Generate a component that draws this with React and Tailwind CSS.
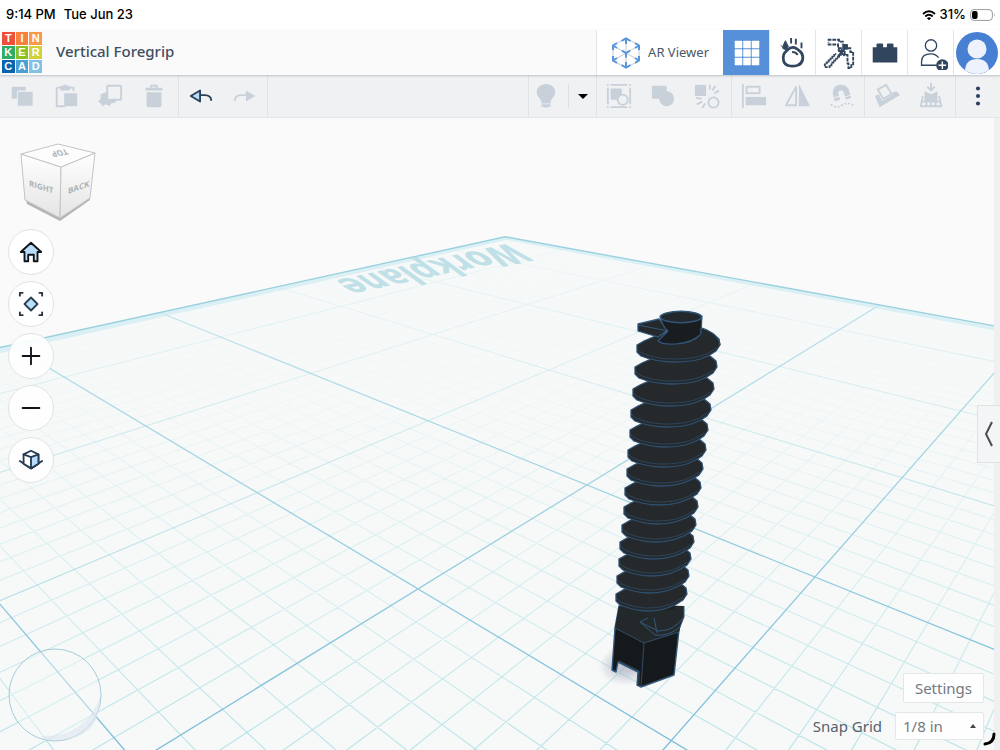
import React from 'react';
import clsx from 'clsx';

const LOGO = [
    ['T', 'bg-[#f0503a]'], ['I', 'bg-[#f9813a]'], ['N', 'bg-[#f99a48]'],
    ['K', 'bg-[#2fac66]'], ['E', 'bg-[#8cc220]'], ['R', 'bg-[#d3d13a]'],
    ['C', 'bg-[#0a63ae]'], ['A', 'bg-[#4b9fd3]'], ['D', 'bg-[#83c0e6]'],
];

// Workplane coordinates (inches from its centre) to screen coordinates
const depth = (u, v) => 1 - 0.201 * u - 0.178 * v;
const project = (u, v) => {
    const w = depth(u, v);
    return [(587 - 253 * u + 82.8 * v) / w, (485 - 14.4 * u - 10.7 * v) / w];
};
const EDGE = 3.84;
const NEAR = 0.4;
const endU = (v) => Math.min(EDGE, (1 - NEAR - 0.178 * v) / 0.201);
const endV = (u) => Math.min(EDGE, (1 - NEAR - 0.201 * u) / 0.178);
const segment = (a, b) => `M${a.map((n) => n.toFixed(1)).join(' ')}L${b.map((n) => n.toFixed(1)).join(' ')}`;

function gridPaths() {
    const paths = { minor: '', major: '', far: '' };
    for (let i = -30; i <= 30; i++) {
        const t = i / 8;
        const d = segment(project(-EDGE, t), project(endU(t), t)) + segment(project(t, -EDGE), project(t, endV(t)));
        if (i % 8 !== 0) paths.minor += d;
        else if (i < 0) paths.far += d;
        else paths.major += d;
    }
    return paths;
}

const GRID = gridPaths();
const toPoints = (pts) => pts.map((p) => p.map((n) => n.toFixed(1)).join(',')).join(' ');
const PLANE = toPoints([
    project(-EDGE, endV(-EDGE)), project(-EDGE, -EDGE), project(endU(-EDGE), -EDGE), [-2000, 1500], [2500, 1500],
]);
const INNER = EDGE - 0.12;
const BAND = toPoints([
    project(-EDGE, endV(-EDGE)), project(-EDGE, -EDGE), project(endU(-EDGE), -EDGE),
    project(endU(-INNER), -INNER), project(-INNER, -INNER), project(-INNER, endV(-INNER)),
]);
const OUTLINE = toPoints([project(-EDGE, endV(-EDGE)), project(-EDGE, -EDGE), project(endU(-EDGE), -EDGE)]);

// left x, right x, y of every turn of the thread, top to bottom
const TURNS = [
    [637, 720, 349], [635, 717, 371], [633, 714, 393], [631, 711, 414], [630, 708, 434],
    [628, 706, 454], [627, 703, 473], [625, 701, 492], [624, 698, 511], [622, 696, 529],
    [620, 694, 546], [619, 691, 563], [617, 689, 580], [616, 687, 598],
];

function Thread() {
    return TURNS.slice().reverse().map(([l, r, y]) => {
        const m = (l + r) / 2;
        return (
            <g key={y} stroke="#2f5070">
                <path
                    d={`M${l} ${y - 4}L${l} ${y + 3}L${l + 4} ${y + 7}C${l + 14} ${y + 11} ${l + 24} ${y + 13} ${m - 4} ${y + 13}C${r - 22} ${y + 13} ${r - 12} ${y + 8} ${r - 4} ${y + 2}L${r} ${y - 4}L${r - 1} ${y - 10}L${r - 7} ${y - 15}Q${m} ${y - 25} ${l + 7} ${y - 8}Z`}
                    fill="#25292c" strokeWidth="1.3"
                />
                <path d={`M${l} ${y}L${l + 5} ${y + 4}C${l + 14} ${y + 8} ${l + 24} ${y + 10} ${m - 4} ${y + 10}C${r - 22} ${y + 10} ${r - 12} ${y + 5} ${r - 4} ${y - 1}`} fill="none" strokeWidth="0.7" />
            </g>
        );
    });
}

function Scene() {
    return (
        <svg viewBox="0 118 1000 632" preserveAspectRatio="xMidYMid slice" className="absolute inset-0 h-full w-full" role="img" aria-label="Workplane">
            <defs>
                <linearGradient id="minor" gradientUnits="userSpaceOnUse" x1="0" y1="237" x2="0" y2="750">
                    <stop offset="0" stopColor="#c4e4e8" stopOpacity="0" />
                    <stop offset="0.3" stopColor="#c4e4e8" stopOpacity="0.12" />
                    <stop offset="0.6" stopColor="#bfe5e8" stopOpacity="0.45" />
                    <stop offset="1" stopColor="#b4e2e6" stopOpacity="0.9" />
                </linearGradient>
                <linearGradient id="major" gradientUnits="userSpaceOnUse" x1="0" y1="237" x2="0" y2="750">
                    <stop offset="0" stopColor="#a8dae4" stopOpacity="0.5" />
                    <stop offset="0.4" stopColor="#9dd2e0" stopOpacity="0.9" />
                    <stop offset="1" stopColor="#7cbcda" />
                </linearGradient>
                <linearGradient id="far" gradientUnits="userSpaceOnUse" x1="0" y1="237" x2="0" y2="620">
                    <stop offset="0" stopColor="#b8dfe6" stopOpacity="0.1" />
                    <stop offset="1" stopColor="#a5dae1" stopOpacity="0.9" />
                </linearGradient>
                <radialGradient id="shade">
                    <stop offset="0.3" stopColor="#8b90a8" stopOpacity="0.45" />
                    <stop offset="1" stopColor="#8b90a8" stopOpacity="0" />
                </radialGradient>
            </defs>
            <rect y="118" width="1000" height="632" fill="#fafafa" />
            <polygon points={PLANE} fill="#f7f9f9" />
            <path d={GRID.minor} stroke="url(#minor)" strokeWidth="1.2" fill="none" />
            <path d={GRID.far} stroke="url(#far)" strokeWidth="1.1" fill="none" />
            <path d={GRID.major} stroke="url(#major)" strokeWidth="1.3" fill="none" />
            <polygon points={BAND} fill="#cfecf3" fillOpacity="0.7" />
            <polyline points={OUTLINE} fill="none" stroke="#9bd0df" strokeWidth="1.4" />
            <text transform="translate(511 243) rotate(168) skewX(42)" fontFamily="'DejaVu Sans', sans-serif" fontWeight="700" fontSize="30" fill="#c0e0e7">Workplane</text>

            <ellipse cx="626" cy="666" rx="28" ry="20" fill="url(#shade)" />
            <g strokeLinejoin="round">
                <polygon points="619,606 683,612 679,630 674,675 641,687 637,685 638,672 618,662 616,672 612,670 615,628" fill="#16191b" stroke="#34587a" strokeWidth="1.4" />
                <polygon points="619,606 684,612 679,632 644,643 615,628" fill="#23282b" />
                <path d="M615 628L644 643L679 632M644 643L641 687M639 684V671L619 661" fill="none" stroke="#34587a" strokeWidth="0.8" />
                <path d="M626 604L684 606L684 617L680 627Q668 637 655 635L640 622L648 618Z" fill="#24292c" />
                <path d="M684 606V617L680 627Q668 637 655 635L640 622L648 618M640 622L658 631Q674 631 683 618M654 618L657 633" fill="none" stroke="#34587a" strokeWidth="1" />
                <polygon points="660,350 690,350 675,610 640,610" fill="#1d2123" />
                <Thread />
                <path d="M638 324L659 319L668 330L658 337L638 331Z" fill="#24292c" stroke="#31567a" strokeWidth="1.3" />
                <path d="M638 325L668 331" stroke="#31567a" strokeWidth="1" />
                <path d="M660 316Q663 328 668 331L658 341Q663 345 675 344Q693 343 701 334L702 316Z" fill="#191d1f" stroke="#31567a" strokeWidth="1.2" />
                <path d="M701 328Q720 334 720 345L700 345Z" fill="#24292c" />
                <path d="M702 328Q719 334 720 345M701 328V334" stroke="#31567a" strokeWidth="1.2" fill="none" />
                <ellipse cx="681" cy="317" rx="20.5" ry="5.7" fill="#22282b" stroke="#31567a" strokeWidth="1.5" />
            </g>
        </svg>
    );
}

function ViewCube() {
    return (
        <svg viewBox="0 0 100 84" className="block h-[84px] w-[100px]" role="img" aria-label="View cube">
            <defs>
                <linearGradient id="side" x1="0" y1="0" x2="0" y2="1">
                    <stop offset="0" stopColor="#ffffff" />
                    <stop offset="1" stopColor="#e4e4e4" />
                </linearGradient>
            </defs>
            <path d="M26 60L60 76L90 57L90 60L60 81L27 64Z" fill="#b4b4b4" />
            <path d="M21 14L61 27L60 78L25 60Z" fill="url(#side)" stroke="#c4c4c4" />
            <path d="M61 27L95 13L90 58L60 78Z" fill="url(#side)" stroke="#c4c4c4" />
            <path d="M58 4L21 14L61 27L95 13Z" fill="#fdfdfd" stroke="#c4c4c4" />
            <g fontFamily="'Open Sans', sans-serif" fontWeight="700" fill="#aeb2b6">
                <text transform="translate(29 46) skewY(17)" fontSize="8">RIGHT</text>
                <text transform="translate(68 54) skewY(-20)" fontSize="8">BACK</text>
                <text transform="translate(66 9) rotate(170) skewX(20)" fontSize="8">TOP</text>
            </g>
        </svg>
    );
}

function ToolButton({ label, children, className }) {
    return (
        <button type="button" aria-label={label} title={label} className={clsx('flex h-full w-11 items-center justify-center text-[#c8d1da]', className)}>
            <svg viewBox="0 0 28 28" className="size-[26px]" fill="currentColor">{children}</svg>
        </button>
    );
}

function ModeButton({ label, active, children }) {
    return (
        <button
            type="button"
            aria-label={label}
            className={clsx('flex w-[46px] items-center justify-center border-l', active ? 'border-[#5690d8] bg-[#5690d8] text-white' : 'border-[#e3e5e8] bg-white text-[#30465f]')}
        >
            <svg viewBox="0 0 36 36" className="size-[34px] shrink-0" fill="none" stroke="currentColor" strokeWidth="2">{children}</svg>
        </button>
    );
}

function NavButton({ label, children }) {
    return (
        <button type="button" aria-label={label} className="flex size-[46px] items-center justify-center rounded-full border border-[#e0e3e5] bg-white/90 text-[#101418]">
            <svg viewBox="0 0 28 28" className="size-[26px] shrink-0" fill="none" stroke="currentColor" strokeWidth="2" strokeLinecap="round" strokeLinejoin="round">{children}</svg>
        </button>
    );
}

function StatusBar() {
    return (
        <div className="flex h-[30px] items-center justify-between bg-white pl-[6px] pr-1 font-['Inter',sans-serif] text-[13px] font-medium text-black">
            <div className="flex gap-2">
                <span>9:14 PM</span>
                <span>Tue Jun 23</span>
            </div>
            <div className="flex items-center gap-1">
                <svg viewBox="0 0 14 11" className="h-[11px] w-[14px]" fill="none" stroke="#000" strokeWidth="2">
                    <path d="M1 4Q7 -1.6 13 4" />
                    <path d="M3.3 6.4Q7 3 10.7 6.4" />
                    <path d="M7 10.3L4.9 8.2Q7 6.5 9.1 8.2Z" fill="#000" stroke="none" />
                </svg>
                <span>31%</span>
                <svg viewBox="0 0 26 12" className="h-3 w-[26px]">
                    <rect x="0.6" y="0.6" width="21.8" height="10.8" rx="3.4" fill="#fff" stroke="#9a9a9a" />
                    <rect x="2" y="2" width="5.6" height="8" rx="2" />
                    <path d="M24 4Q25.6 6 24 8Z" fill="#9a9a9a" />
                </svg>
            </div>
        </div>
    );
}

function Header() {
    return (
        <header className="relative z-10 flex h-[45px] bg-[#fafafa] shadow-[0_1px_2px_rgba(90,105,120,0.35)]">
            <a href="#home" aria-label="Tinkercad" className="my-[2px] grid w-[42px] shrink-0 grid-cols-3 gap-px bg-white pl-[2px]">
                {LOGO.map(([letter, color]) => (
                    <span key={letter} className={clsx('flex h-[13px] items-center justify-center font-["Liberation_Sans",sans-serif] text-[11px] leading-none font-bold text-white', color)}>{letter}</span>
                ))}
            </a>
            <h1 className="ml-[14px] flex grow items-center pb-[2px] text-[15px] font-medium text-[#3d4e61]">Vertical Foregrip</h1>
            <button type="button" className="flex items-center gap-[7px] border-l border-[#e3e5e8] bg-white px-[14px] text-[13px] text-[#4a5768]">
                <svg viewBox="0 0 30 32" className="h-8 w-[30px]" fill="none" stroke="#5796dc" strokeWidth="2">
                    <path d="M15 2V30M2 8.5L15 16L28 8.5M2 23.5L15 16L28 23.5M2 8.5V23.5M28 8.5V23.5M2 8.5L15 1L28 8.5M2 23.5L15 31L28 23.5" stroke="#c3c7cc" strokeWidth="1" />
                    <path d="M10.5 4L15 1.5L19.5 4M15 2V7M2 13V8.5L6 6.2M2 8.5L6 11M28 13V8.5L24 6.2M28 8.5L24 11M2 19V23.5L6 25.8M2 23.5L6 21M28 19V23.5L24 25.8M28 23.5L24 21M10.5 28L15 30.5L19.5 28M15 30V25M11 13.7L15 16L19 13.7M15 16V20.5" />
                </svg>
                AR Viewer
            </button>
            <ModeButton label="3D design" active>
                <g fill="currentColor" stroke="none">
                    {[6, 15, 24].map((y) => [6, 15, 24].map((x) => <rect key={x + '-' + y} x={x - 1} y={y - 1} width="8" height="8" rx="0.6" />))}
                </g>
            </ModeButton>
            <ModeButton label="Sim lab">
                <path d="M18 12C22 12 24 15 27 18C30 23 28 29 23 31C17 33 9 32 8 26C7 21 8 18 11 16C13 14 14 12 18 12Z" strokeWidth="3" />
                <path d="M17 17Q21 17 23 20" />
                <path d="M16 2V8M21 3V9M27 7V13" />
                <path d="M10 5L13 11L11 15L7 13L8 9ZM5 10L9 13" fill="currentColor" strokeWidth="1" />
            </ModeButton>
            <ModeButton label="Blocks">
                <path d="M6 4H18V6H22V9M27 13H30V17H33V31H31V34H28V29H27V20H24V16H21V13H17V9H7V6" strokeDasharray="4 1" />
                <path d="M17 16H21V20H18V22H16V24H14V26H12V28H10V31H8V33H3V29H5V27H7V25H9V23H11V21H13V19H15" strokeDasharray="3 1" />
                <path d="M22 9H27V14H22Z" fill="currentColor" strokeWidth="1" />
                <path d="M17 14L24 21M24 14L17 21" />
            </ModeButton>
            <ModeButton label="Bricks">
                <path d="M5 12H9V9Q9 8 10 8H15Q16 8 16 9V12H20V9Q20 8 21 8H26Q27 8 27 9V12H31V28H5Z" fill="currentColor" stroke="none" />
            </ModeButton>
            <ModeButton label="Invite people">
                <circle cx="18" cy="10" r="6" strokeWidth="1.4" />
                <path d="M24 31H8V27Q8 19 18 19Q23 19 26 23" strokeWidth="1.4" />
                <circle cx="30" cy="31" r="6.5" fill="currentColor" stroke="none" />
                <path d="M30 27V35M26 31H34" stroke="#fff" strokeWidth="1.5" />
            </ModeButton>
            <button type="button" aria-label="Account" className="flex w-[47px] items-center justify-center border-l border-[#e3e5e8] bg-white">
                <svg viewBox="0 0 42 42" className="size-[42px] shrink-0">
                    <circle cx="21" cy="21" r="21" fill="#477fd3" />
                    <circle cx="21" cy="17" r="9.5" fill="#edf2fd" />
                    <path d="M9 38Q10 27 21 27Q32 27 33 38Q21 46 9 38Z" fill="#edf2fd" />
                </svg>
            </button>
        </header>
    );
}

function Toolbar() {
    return (
        <div className="flex h-[43px] border-b border-[#e4e6e8] bg-[#f0f1f3]">
            <div className="flex border-r border-[#e0e3e6]">
                <div className="flex border-r border-[#e0e3e6] pr-[2px]">
                    <ToolButton label="Copy">
                        <path d="M3 4h15v4H9v9H3z" /><rect x="9" y="9" width="17" height="16" rx="1" stroke="#f0f1f3" />
                    </ToolButton>
                    <ToolButton label="Paste">
                        <path d="M4 5H22V9M4 5V25H13" fill="none" stroke="currentColor" strokeWidth="2" /><path d="M8 3h3q2-3 4 0h3v5H8z" /><rect x="12" y="11" width="14" height="14" rx="1" />
                    </ToolButton>
                    <ToolButton label="Duplicate">
                        <path d="M4 12L12 9V18H20V21L15 22L14 25L9 23L6 25L4 22L1 20L4 17Z" /><rect x="11" y="3" width="15" height="15" rx="1" fill="#f0f1f3" stroke="currentColor" strokeWidth="2" />
                    </ToolButton>
                    <ToolButton label="Delete">
                        <path d="M5 5h5V2h8v3h5v3H5zM12 4v1h4V4z" fillRule="evenodd" /><path d="M6 10h16v14q0 2-2 2H8q-2 0-2-2z" />
                    </ToolButton>
                </div>
                <ToolButton label="Undo">
                    <path d="M3 14L13 8V20Z" fill="#b8dcf8" stroke="#2b4057" strokeWidth="2" strokeLinejoin="round" /><path d="M13 13H18Q25 13 25 19" fill="none" stroke="#2b4057" strokeWidth="2" />
                </ToolButton>
                <ToolButton label="Redo">
                    <path d="M25 14L15 8V20Z" /><path d="M16 13H10Q3 13 3 19" fill="none" stroke="currentColor" strokeWidth="2" />
                </ToolButton>
            </div>
            <div className="grow" />
            <div className="flex border-l border-[#e0e3e6]">
                <ToolButton label="Show all" className="w-[34px]">
                    <path d="M14 1C8 1 4 5 4 10C4 15 9 17 9 21V22H19V21C19 17 24 15 24 10C24 5 20 1 14 1ZM9 23h10v2q-5 3-10 0z" />
                </ToolButton>
                <button type="button" aria-label="Visibility options" className="my-[9px] ml-[5px] flex w-7 items-center justify-center border-l border-[#dcdfe2]">
                    <svg viewBox="0 0 10 5" className="h-[5px] w-[10px]"><path d="M0 0h10L5 5z" /></svg>
                </button>
            </div>
            <div className="flex border-l border-[#e0e3e6] pr-[2px]">
                <ToolButton label="Group">
                    <path d="M5 2H23M5 26H23M2 5V23M26 5V23" fill="none" stroke="currentColor" strokeWidth="2" /><path d="M1 1h2v2H1zM25 1h2v2h-2zM1 25h2v2H1zM25 25h2v2h-2z" />
                    <rect x="5" y="6" width="12" height="12" rx="1" /><circle cx="18" cy="18" r="5.5" fill="#f0f1f3" stroke="currentColor" strokeWidth="2" />
                </ToolButton>
                <ToolButton label="Union">
                    <rect x="2" y="3" width="16" height="14" rx="1" /><circle cx="18" cy="17" r="8" />
                </ToolButton>
                <ToolButton label="Ungroup">
                    <rect x="1" y="2" width="12" height="12" /><circle cx="21" cy="21" r="5.5" fill="none" stroke="currentColor" strokeWidth="2" />
                    <path d="M17 7V2M20 8L23 3M22 11L27 8M8 17L2 16M9 20L3 23M12 22L9 27" fill="none" stroke="currentColor" strokeWidth="2" />
                </ToolButton>
            </div>
            <div className="flex border-l border-[#e0e3e6]">
                <ToolButton label="Align">
                    <path d="M2 1V27" stroke="currentColor" strokeWidth="2" /><rect x="6" y="4" width="14" height="7" fill="none" stroke="currentColor" strokeWidth="2" /><rect x="5" y="15" width="22" height="9" />
                </ToolButton>
                <ToolButton label="Mirror">
                    <path d="M12 4V24H1Z" fill="none" stroke="currentColor" strokeWidth="2" /><path d="M15 1L27 25H15Z" />
                </ToolButton>
                <ToolButton label="Cruise">
                    <path d="M9 19L7 11Q7 5 13 5Q18 5 19 10L21 17" fill="none" stroke="currentColor" strokeWidth="6" /><path d="M5 16L12 14M17 15L24 13" stroke="#f0f1f3" />
                    <path d="M2 23Q8 28 14 24T26 24" fill="none" stroke="currentColor" strokeWidth="2" strokeDasharray="2 2" />
                </ToolButton>
            </div>
            <div className="flex border-l border-[#e0e3e6] pr-[2px]">
                <ToolButton label="Workplane">
                    <path d="M1 14L5 12L9 19L20 13L20 10L24 9L28 13L6 26Z" /><path d="M4 7L13 2L19 12L10 17Z" fill="#f0f1f3" stroke="currentColor" strokeWidth="2" />
                </ToolButton>
                <ToolButton label="Drop to workplane">
                    <path d="M14 0V7M10 4L14 8L18 4" fill="none" stroke="currentColor" strokeWidth="2" /><path d="M7 9L14 12L21 9V20H7Z" />
                    <path d="M6 15H5L3 25H25L23 15H22M9 25V20M14 25V20M19 25V20M4 20H24" fill="none" stroke="currentColor" strokeWidth="2" />
                </ToolButton>
            </div>
            <ToolButton label="More" className="w-[45px] border-l border-[#e0e3e6]">
                <g fill="#2d3f63"><circle cx="14" cy="6" r="2.2" /><circle cx="14" cy="14" r="2.2" /><circle cx="14" cy="22" r="2.2" /></g>
            </ToolButton>
        </div>
    );
}

export default function App() {
    return (
        <div className="flex min-h-screen flex-col bg-white font-['Noto_Sans',sans-serif]">
            <StatusBar />
            <Header />
            <Toolbar />
            <main className="relative flex grow overflow-hidden bg-[#fafafa]">
                <Scene />

                {/* View controls */}
                <nav className="relative flex grow flex-col justify-between pt-[22px] pb-2">
                    <div>
                        <ViewCube />
                        <div className="mt-[5px] ml-2 flex flex-col gap-[6px]">
                            <NavButton label="Home view">
                                <path d="M3 14L14 4L25 14H21V24H17V17H11V24H7V14Z" fill="#b8dcfa" />
                            </NavButton>
                            <NavButton label="Fit view">
                                <path d="M14 7L21 14L14 21L7 14Z" fill="#b8e2fa" stroke="#2b4057" />
                                <path d="M2 5V2H5M23 2H26V5M26 23V26H23M5 26H2V23" stroke="#263340" />
                            </NavButton>
                            <NavButton label="Zoom in"><path d="M14 5V23M5 14H23" /></NavButton>
                            <NavButton label="Zoom out"><path d="M5 14H23" /></NavButton>
                            <NavButton label="Orthographic view">
                                <g stroke="#263c55">
                                    <path d="M2 15L14 23L26 15" />
                                    <path d="M6 8L14 4L22 8V18L14 23L6 18Z" fill="#fff" />
                                    <path d="M14 11L22 8V18L14 23Z" fill="#b8dcfa" />
                                    <path d="M6 8L14 11" />
                                </g>
                            </NavButton>
                        </div>
                    </div>
                    <svg viewBox="0 0 94 94" className="ml-2 size-[94px]">
                        <circle cx="47" cy="47" r="46" fill="#f8fafb" fillOpacity="0.4" stroke="#a5ccd8" />
                        <path d="M92 50Q92 92 47 92Q38 92 32 88Q76 90 92 50Z" fill="#dde3ee" fillOpacity="0.6" />
                    </svg>
                </nav>

                {/* Grid settings */}
                <div className="relative flex flex-col items-end justify-end gap-[9px] pr-[10px] pb-[10px]">
                    <button type="button" className="rounded-xs border border-[#e4e6e8] bg-white/90 px-[11px] text-[15px] leading-7 text-[#747a80]">Settings</button>
                    <div className="flex items-center gap-[13px]">
                        <label htmlFor="snap" className="text-[15px] text-[#56616c]">Snap Grid</label>
                        <div className="relative">
                            <select id="snap" defaultValue="1/8 in" className="h-7 w-[89px] appearance-none rounded-xs border border-[#e4e6e8] bg-white/90 px-[7px] text-[15px] text-[#747a80]">
                                <option>1/16 in</option>
                                <option>1/8 in</option>
                                <option>1/4 in</option>
                            </select>
                            <svg viewBox="0 0 6 4" className="pointer-events-none absolute top-3 right-2 h-1 w-[6px]" fill="#444"><path d="M3 0L6 4H0z" /></svg>
                        </div>
                    </div>
                </div>
                <aside className="relative w-[6px] shrink-0 bg-[#eff0f2]">
                    <button type="button" aria-label="Show shapes panel" className="absolute top-[287px] right-0 flex h-[58px] w-[23px] items-center justify-center border border-r-0 border-[#e0e2e4] bg-[#f4f5f6]">
                        <svg viewBox="0 0 10 26" className="h-[26px] w-[10px]" fill="none" stroke="#4a4d50" strokeWidth="2"><path d="M8 1L2 13L8 25" /></svg>
                    </button>
                    <svg viewBox="0 0 16 16" className="absolute right-[3px] bottom-[3px] size-4" fill="none" stroke="#000" strokeWidth="3" strokeLinecap="round"><path d="M13 3Q13 12 4 13" /></svg>
                </aside>
            </main>
        </div>
    );
}
